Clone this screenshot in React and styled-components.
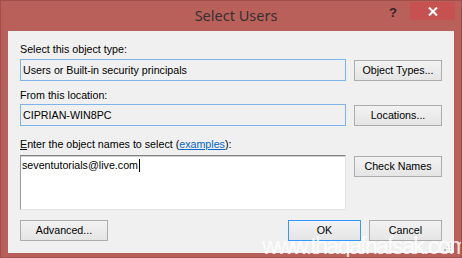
import React from 'react'
import styled, { createGlobalStyle } from 'styled-components'

const GlobalStyle = createGlobalStyle`
  html, body {
    margin: 0;
    padding: 0;
    background: #b9605a;
  }
  body {
    font-family: "Liberation Sans", Arial, sans-serif;
  }
`;

const Window = styled.div`
  position: relative;
  width: 462px;
  height: 258px;
  box-sizing: border-box;
  border: 1px solid #a24f49;
  background-color: #b9605a;
  display: flex;
  flex-direction: column;
  overflow: hidden;
`;

const TitleBar = styled.div`
  height: 30px;
  display: grid;
  grid-template-columns: 1fr auto 1fr;
  align-items: start;
`;

const Title = styled.div`
  grid-column: 2;
  padding-left: 10px;
  padding-top: 4px;
  font-family: "Noto Sans", "Open Sans", sans-serif;
  font-size: 14.5px;
  line-height: 20px;
  color: #353030;
`;

const Controls = styled.div`
  grid-column: 3;
  justify-self: end;
  display: flex;
  align-items: flex-start;
`;

const HelpButton = styled.div`
  width: 12px;
  margin-top: 4px;
  margin-right: 11px;
  font-family: "Liberation Sans", Arial, sans-serif;
  font-weight: bold;
  font-size: 13px;
  line-height: 16px;
  color: #2e2626;
  text-align: center;
`;

const CloseButton = styled.div`
  width: 45px;
  height: 18px;
  margin-top: 1px;
  margin-right: 6px;
  background-color: #c75050;
  display: flex;
  align-items: center;
  justify-content: center;
`;

const Panel = styled.div`
  position: relative;
  flex: 1;
  margin: 0 7px 4px 7px;
  padding: 12px 12px 0 12px;
  background-color: #f0f0f0;
  display: flex;
  flex-direction: column;
  font-size: 10.7px;
  line-height: 13px;
  color: #000;
`;

const Label = styled.div`
  margin-top: ${p => p.$top || 0}px;
  height: 13px;
  white-space: nowrap;
`;

const Underline = styled.span`
  text-decoration: underline;
`;

const Link = styled.span`
  color: #0066cc;
  text-decoration: underline;
`;

const FieldRow = styled.div`
  margin-top: ${p => p.$top || 0}px;
  display: grid;
  grid-template-columns: 326px 88px;
  column-gap: 8px;
  align-items: ${p => p.$align || 'center'};
`;

const ReadOnlyBox = styled.div`
  height: 22px;
  box-sizing: border-box;
  border: 1px solid #7eb4ea;
  background-color: #f0f0f0;
  padding: 0 2px;
  display: flex;
  align-items: center;
  white-space: nowrap;
`;

const NamesBox = styled.div`
  height: 55px;
  box-sizing: border-box;
  border-style: solid;
  border-width: 1px;
  border-color: #828282 #e3e3e3 #e3e3e3 #9a9a9a;
  box-shadow: inset 0 1px 0 #cfcfcf;
  background-color: #fff;
  padding: 3px 1px;
  display: flex;
  align-items: flex-start;
  white-space: nowrap;
`;

const Caret = styled.span`
  display: inline-block;
  width: 1px;
  height: 13px;
  background-color: #000;
  margin-left: 1px;
`;

const Button = styled.div`
  width: ${p => p.$width || 88}px;
  height: 21px;
  margin-top: ${p => p.$top || 0}px;
  box-sizing: border-box;
  border: 1px solid ${p => (p.$primary ? '#3399ff' : '#acacac')};
  background: linear-gradient(#f2f2f2, #e5e5e5);
  display: flex;
  align-items: center;
  justify-content: center;
  white-space: nowrap;
`;

const Footer = styled.div`
  margin-top: 10px;
  display: flex;
  justify-content: space-between;
`;

const FooterRight = styled.div`
  display: flex;
  gap: 8px;
`;

const Grip = styled.svg`
  position: absolute;
  right: 1px;
  bottom: 1px;
`;

const Watermark = styled.div`
  position: absolute;
  left: 261px;
  top: 232px;
  font-family: "Liberation Sans", Arial, sans-serif;
  font-size: 23px;
  line-height: 26px;
  letter-spacing: -1.6px;
  color: rgba(255, 255, 255, 0.85);
  white-space: nowrap;
  pointer-events: none;
`;

const CloseIcon = () => (
  <svg width="10" height="9" viewBox="0 0 10 9">
    <path d="M1 0.5 L9 8.5 M9 0.5 L1 8.5" stroke="#fff" strokeWidth="2" />
  </svg>
);

const GripIcon = () => (
  <Grip width="10" height="10" viewBox="0 0 10 10">
    {[[7, 1], [4, 4], [7, 4], [1, 7], [4, 7], [7, 7]].map(([x, y]) => (
      <rect key={`${x}-${y}`} x={x} y={y} width="2" height="2" fill="#b8b8b8" />
    ))}
  </Grip>
);

const App = () => {
  return (
    <>
      <GlobalStyle />
      <Window>
        <TitleBar>
          <Title>Select Users</Title>
          <Controls>
            <HelpButton>?</HelpButton>
            <CloseButton>
              <CloseIcon />
            </CloseButton>
          </Controls>
        </TitleBar>
        <Panel>
          <Label>Select this object type:</Label>
          <FieldRow $top={3}>
            <ReadOnlyBox>Users or Built-in security principals</ReadOnlyBox>
            <Button>Object Types...</Button>
          </FieldRow>

          <Label $top={8}>From this location:</Label>
          <FieldRow $top={2}>
            <ReadOnlyBox>CIPRIAN-WIN8PC</ReadOnlyBox>
            <Button>Locations...</Button>
          </FieldRow>

          <Label $top={12}>
            <Underline>E</Underline>nter the object names to select (<Link>examples</Link>):
          </Label>
          <FieldRow $top={4} $align="start">
            <NamesBox>
              seventutorials@live.com
              <Caret />
            </NamesBox>
            <Button $top={1}>Check Names</Button>
          </FieldRow>

          <Footer>
            <Button $width={88}>Advanced...</Button>
            <FooterRight>
              <Button $width={73} $primary>OK</Button>
              <Button $width={73}>Cancel</Button>
            </FooterRight>
          </Footer>
          <GripIcon />
        </Panel>
        <Watermark>www.thaqafnafsak.com</Watermark>
      </Window>
    </>
  )
}

export default App;
